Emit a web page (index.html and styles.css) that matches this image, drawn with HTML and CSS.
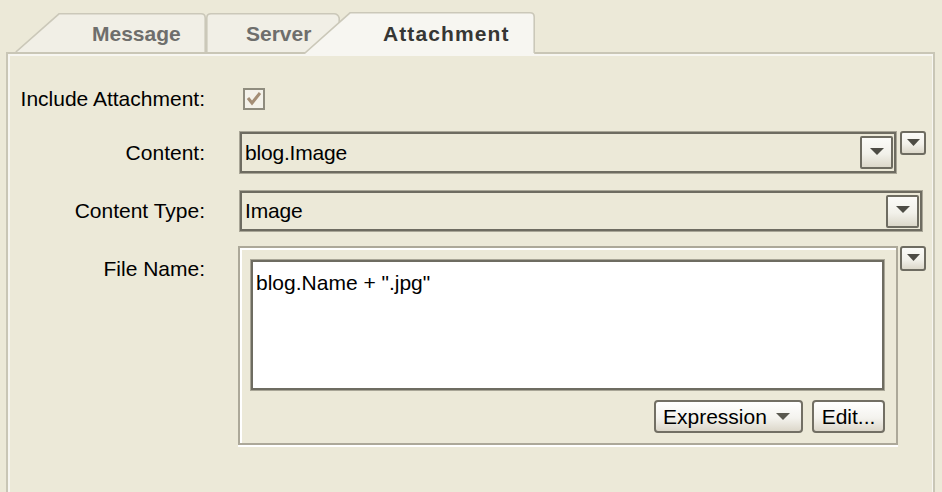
FILE: index.html
```
<!DOCTYPE html>
<html>
<head>
<meta charset="utf-8">
<link rel="stylesheet" href="styles.css">
</head>
<body>
<div class="tabs">
  <div class="tab tab-message">
    <svg class="tab-shape" width="191" height="39" viewBox="0 0 191 39"><path d="M0.8,39 L44,0.8 L186,0.8 Q190.2,0.8 190.2,5 L190.2,39" fill="#F1EFE6" stroke="#CBC8B9" stroke-width="1.6"/></svg>
    <span class="tab-label">Message</span>
  </div>
  <div class="tab tab-server">
    <svg class="tab-shape" width="134" height="39" viewBox="0 0 134 39"><path d="M0.8,39 L0.8,5 Q0.8,0.8 5,0.8 L128,0.8 Q132,0.8 133.2,5 L133.2,39" fill="#F1EFE6" stroke="#CBC8B9" stroke-width="1.6"/></svg>
    <span class="tab-label">Server</span>
  </div>
  <div class="tab tab-attach">
    <svg class="tab-shape" width="232" height="42" viewBox="0 0 232 42"><path d="M0.8,42 L47,0.8 L227,0.8 Q231.2,0.8 231.2,5 L231.2,42 Z" fill="#F7F6F1" stroke="none"/><path d="M0.8,42 L47,0.8 L227,0.8 Q231.2,0.8 231.2,5 L231.2,41" fill="none" stroke="#CBC8B9" stroke-width="1.6"/></svg>
    <span class="tab-label">Attachment</span>
  </div>
</div>
<div class="panel">
  <div class="row row-check">
    <div class="label">Include Attachment:</div>
    <div class="checkbox"><svg width="18" height="18" viewBox="0 0 18 18"><path d="M3,8 L7,13 L15,3" fill="none" stroke="#A48E76" stroke-width="3"/></svg></div>
  </div>
  <div class="row row-content">
    <div class="label">Content:</div>
    <div class="combo combo-content">
      <span class="combo-text">blog.Image</span>
      <span class="combo-btn"><svg width="14" height="7" viewBox="0 0 14 7"><path d="M0,0 L14,0 L7,7 Z" fill="#4D4C45"/></svg></span>
    </div>
    <div class="ext-btn"><svg width="13" height="7" viewBox="0 0 13 7"><path d="M0,0 L13,0 L6.5,7 Z" fill="#4D4C45"/></svg></div>
  </div>
  <div class="row row-type">
    <div class="label">Content Type:</div>
    <div class="combo combo-type">
      <span class="combo-text">Image</span>
      <span class="combo-btn"><svg width="14" height="7" viewBox="0 0 14 7"><path d="M0,0 L14,0 L7,7 Z" fill="#4D4C45"/></svg></span>
    </div>
  </div>
  <div class="row row-file">
    <div class="label label-top">File Name:</div>
    <div class="group">
      <div class="textarea">blog.Name + ".jpg"</div>
      <div class="btn-row">
        <div class="btn btn-expr"><span>Expression</span><svg class="btn-arrow" width="14" height="7" viewBox="0 0 14 7"><path d="M0,0 L14,0 L7,7 Z" fill="#5A5950"/></svg></div>
        <div class="btn btn-edit">Edit...</div>
      </div>
    </div>
    <div class="ext-btn ext-file"><svg width="13" height="7" viewBox="0 0 13 7"><path d="M0,0 L13,0 L6.5,7 Z" fill="#4D4C45"/></svg></div>
  </div>
</div>
</body>
</html>
```
FILE: styles.css
```
html, body {
  margin: 0;
  padding: 0;
  height: 492px;
  overflow: hidden;
  background: #ECE9D8;
  font-family: "Liberation Sans", Arial, sans-serif;
  font-size: 21px;
  color: #000;
}

.tabs {
  display: flex;
  align-items: flex-end;
  height: 52px;
  padding-left: 15px;
  position: relative;
  z-index: 2;
}

.tab {
  position: relative;
  flex: none;
  height: 39px;
  font-weight: bold;
  color: #6E6E6C;
}

.tab-shape {
  position: absolute;
  left: 0;
  top: 0;
}

.tab-label {
  position: relative;
  display: block;
  padding-top: 9px;
  line-height: 24px;
}

.tab-message {
  width: 191px;
}
.tab-message .tab-label {
  padding-left: 77px;
}

.tab-server {
  width: 134px;
}
.tab-server .tab-label {
  padding-left: 40px;
}

.tab-attach {
  width: 232px;
  height: 42px;
  margin-left: -37px;
  margin-bottom: -2px;
  color: #363634;
}
.tab-attach .tab-label {
  padding-left: 80px;
  padding-top: 10px;
  letter-spacing: 1.1px;
}

.panel {
  position: relative;
  z-index: 1;
  margin-left: 6px;
  width: 929px;
  height: 460px;
  box-sizing: border-box;
  border: 2px solid #C9C6B6;
  box-shadow: inset 2px 2px 0 #F7F6F1, inset -1px 0 0 #F7F6F1;
  padding-top: 34px;
}

.row {
  display: flex;
  align-items: center;
}

.label {
  flex: none;
  width: 197px;
  margin-right: 34px;
  text-align: right;
  line-height: 24px;
}

.row-check {
  height: 22px;
}

.checkbox {
  margin-left: 4px;
  width: 22px;
  height: 22px;
  box-sizing: border-box;
  border: 2px solid #8F8C7E;
  background: #F4F2EA;
  display: flex;
}

.row-content {
  margin-top: 21px;
}

.row-type {
  margin-top: 16px;
}

.combo {
  flex: none;
  display: flex;
  align-items: center;
  box-sizing: border-box;
  height: 43px;
  border: 1px solid #A9A697;
  box-shadow: inset 0 0 0 2px #6E6C61;
  padding: 0 3px 0 5px;
  background: #ECE9D8;
}

.combo-content {
  width: 658px;
  align-self: flex-start;
}

.combo-type {
  width: 684px;
  height: 42px;
}

.combo-text {
  flex: 1;
  line-height: 24px;
  letter-spacing: -0.2px;
}

.combo-btn {
  flex: none;
  width: 33px;
  height: 33px;
  box-sizing: border-box;
  border: 2px solid #6E6C61;
  border-radius: 2px;
  background: linear-gradient(#FBFBF8, #F2F1EA 55%, #DCD8CA);
  display: flex;
  align-items: center;
  justify-content: center;
  padding-bottom: 3px;
}

.ext-btn {
  flex: none;
  align-self: flex-start;
  margin-left: 3px;
  width: 26px;
  height: 24px;
  box-sizing: border-box;
  border: 2px solid #6E6C61;
  border-radius: 3px;
  background: linear-gradient(#FBFBF8, #F2F1EA 55%, #DCD8CA);
  display: flex;
  justify-content: center;
  padding-top: 6px;
}

.ext-file {
  margin-left: 2px;
  height: 25px;
}

.row-file {
  margin-top: 14px;
  align-items: flex-start;
}

.label-top {
  padding-top: 11px;
}

.group {
  flex: none;
  margin-left: -1px;
  width: 660px;
  box-sizing: border-box;
  border: 2px solid #ACA899;
  box-shadow: inset 2px 2px 0 #FFFFFF, 0 2px 0 #FFFFFF;
  padding: 11px 11px 10px 10px;
}

.textarea {
  height: 132px;
  box-sizing: border-box;
  border: 1px solid #A9A697;
  box-shadow: inset 0 0 0 2px #6E6C61;
  background: #FFFFFF;
  padding: 11px 5px;
  line-height: 24px;
}

.btn-row {
  display: flex;
  justify-content: flex-end;
  gap: 9px;
  margin-top: 9px;
}

.btn {
  height: 33px;
  box-sizing: border-box;
  border: 2px solid #726F64;
  border-radius: 4px;
  background: linear-gradient(#FFFFFF, #F4F3EE 55%, #DCD7CA);
  display: flex;
  align-items: center;
  line-height: 24px;
}

.btn-expr {
  width: 149px;
  padding-left: 7px;
}

.btn-arrow {
  margin-left: auto;
  margin-right: 11px;
}

.btn-edit {
  width: 73px;
  justify-content: center;
}
```
